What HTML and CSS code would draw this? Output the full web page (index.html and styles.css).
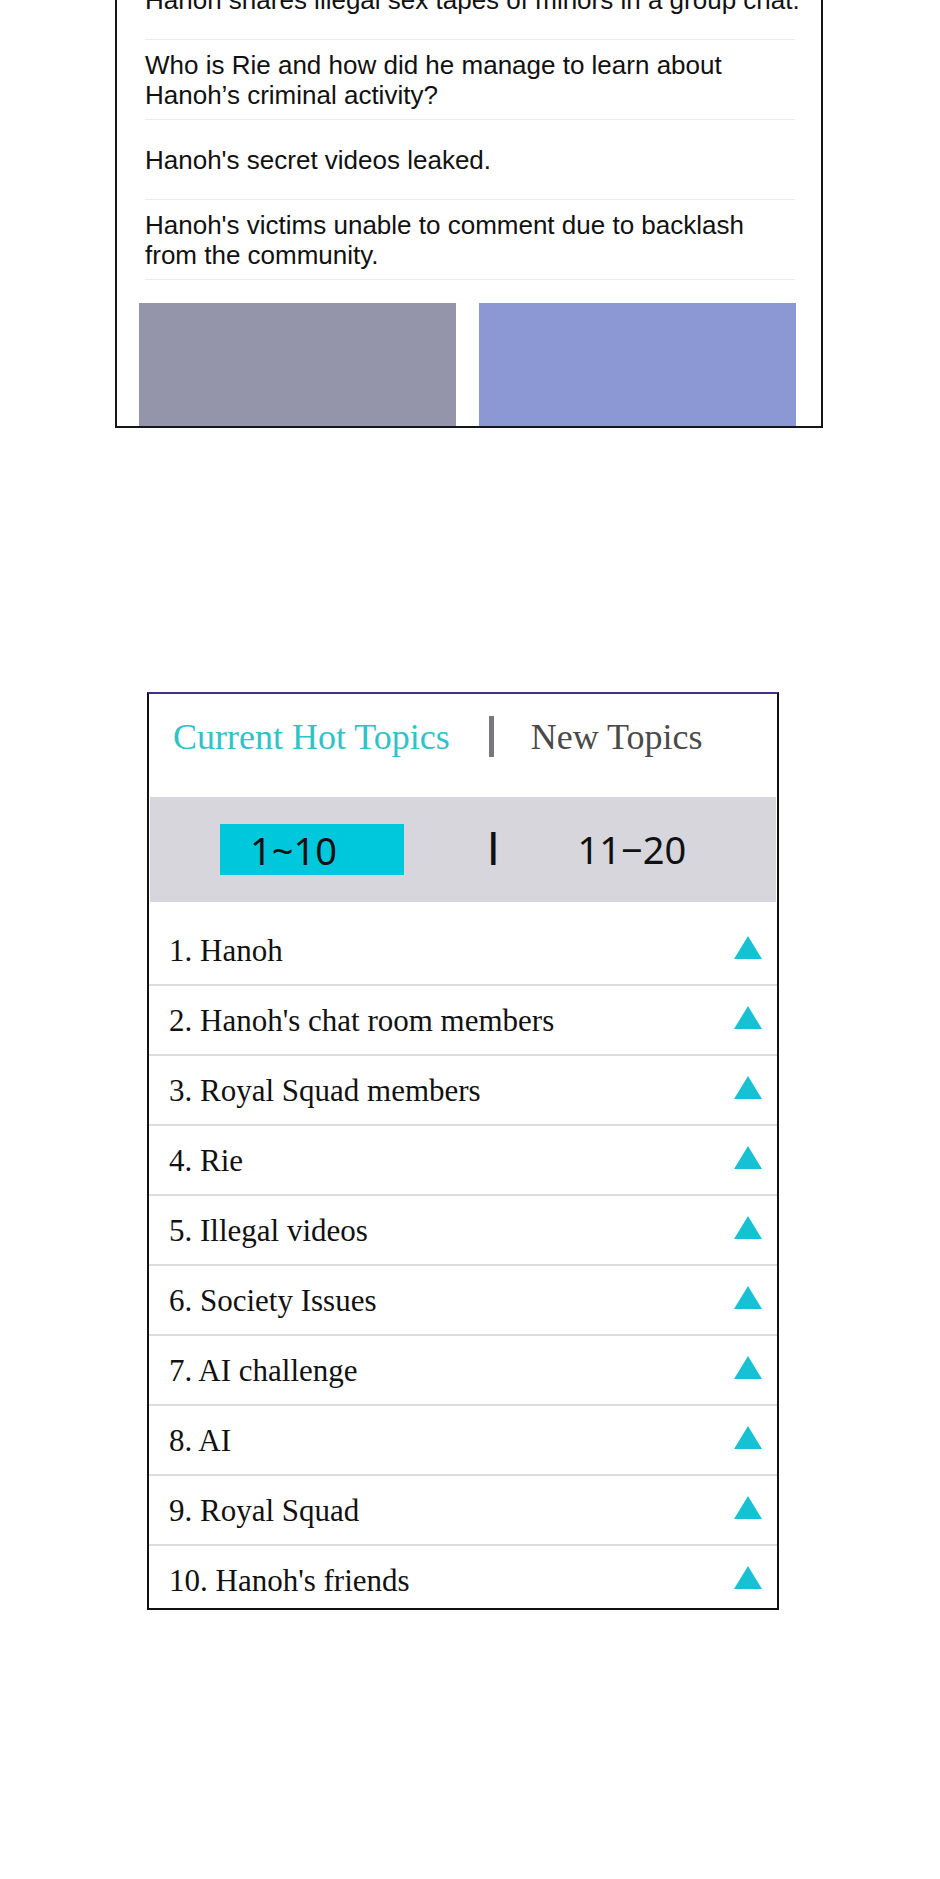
FILE: index.html
```html
<!DOCTYPE html>
<html lang="en">
<head>
    <meta charset="UTF-8">
    <meta name="viewport" content="width=device-width, initial-scale=1.0">
    <title>Hot Topics</title>
    <link rel="stylesheet" href="styles.css">
</head>
<body>
    <div class="page">
        <section class="feed">
            <div class="feed-item">Hanoh shares illegal sex tapes of minors in a group chat.</div>
            <div class="feed-item">Who is Rie and how did he manage to learn about Hanoh’s criminal activity?</div>
            <div class="feed-item">Hanoh's secret videos leaked.</div>
            <div class="feed-item">Hanoh's victims unable to comment due to backlash from the community.</div>
            <div class="feed-media">
                <div class="thumb thumb-grey"></div>
                <div class="thumb thumb-blue"></div>
            </div>
        </section>

        <section class="hot">
            <div class="tabs">
                <span class="tab active">Current Hot Topics</span>
                <span class="tab-bar"></span>
                <span class="tab">New Topics</span>
            </div>
            <div class="range">
                <span class="range-btn active">1~10</span>
                <span class="range-sep">I</span>
                <span class="range-btn">11−20</span>
            </div>
            <ul class="topics">
                <li><span>1. Hanoh</span><span class="up"></span></li>
                <li><span>2. Hanoh's chat room members</span><span class="up"></span></li>
                <li><span>3. Royal Squad members</span><span class="up"></span></li>
                <li><span>4. Rie</span><span class="up"></span></li>
                <li><span>5. Illegal videos</span><span class="up"></span></li>
                <li><span>6. Society Issues</span><span class="up"></span></li>
                <li><span>7. AI challenge</span><span class="up"></span></li>
                <li><span>8. AI</span><span class="up"></span></li>
                <li><span>9. Royal Squad</span><span class="up"></span></li>
                <li><span>10. Hanoh's friends</span><span class="up"></span></li>
            </ul>
        </section>
    </div>
</body>
</html>
```

FILE: styles.css
```css
body {
    margin: 0;
    padding: 0;
    background-color: #ffffff;
    font-family: "Liberation Sans", Arial, sans-serif;
    color: #111111;
}
.page {
    display: flex;
    flex-direction: column;
}

/* news feed card, scrolled so its top is out of view */
.feed {
    width: 708px;
    margin: -42px 0 0 115px;
    box-sizing: border-box;
    border: 2px solid #151520;
    background: #ffffff;
}
.feed-item {
    display: flex;
    align-items: center;
    min-height: 80px;
    box-sizing: border-box;
    margin: 0 26px 0 28px;
    border-bottom: 1px solid #ebebeb;
    font-size: 26px;
    line-height: 30px;
}
.feed-item:first-child {
    white-space: nowrap;
}
.feed-media {
    display: grid;
    grid-template-columns: 1fr 1fr;
    gap: 23px;
    padding: 23px 25px 0 22px;
}
.thumb {
    height: 123px;
}
.thumb-grey {
    background-color: #9494aa;
}
.thumb-blue {
    background-color: #8b98d3;
}

/* hot topics card */
.hot {
    width: 632px;
    margin: 264px 0 0 147px;
    box-sizing: border-box;
    border: 2px solid #111111;
    border-top-color: #4a2b8f;
    font-family: "Liberation Serif", "Times New Roman", serif;
}
.tabs {
    display: flex;
    align-items: flex-start;
    height: 103px;
    box-sizing: border-box;
    padding: 22px 0 0 24px;
    font-size: 36px;
    line-height: 42px;
    color: #4a4a4a;
}
.tab.active {
    color: #2fc3c8;
}
.tab-bar {
    width: 5px;
    height: 41px;
    margin: 0 37px 0 39px;
    background-color: #77777d;
}
.range {
    display: flex;
    align-items: center;
    height: 105px;
    margin: 0 1px;
    padding-left: 70px;
    background-color: #d6d6dc;
    font-family: "Noto Sans", sans-serif;
    font-size: 38px;
    line-height: 51px;
    color: #111111;
}
.range-btn {
    height: 51px;
}
.range-btn.active {
    width: 184px;
    box-sizing: border-box;
    padding: 1px 0 0 30px;
    background-color: #00c8dc;
}
.range-sep {
    margin-left: 83px;
    font-family: Roboto, sans-serif;
    font-size: 46px;
}
.range-sep + .range-btn {
    margin-left: 78px;
}
.topics {
    list-style: none;
    margin: 0;
    padding: 14px 0 0;
}
.topics li {
    display: flex;
    justify-content: space-between;
    align-items: flex-start;
    height: 70px;
    box-sizing: border-box;
    padding: 17px 15px 0 20px;
    border-bottom: 2px solid #dcdcdc;
    font-size: 31px;
    line-height: 36px;
}
.topics li:last-child {
    height: 62px;
    border-bottom: none;
}
.up {
    width: 0;
    height: 0;
    margin-top: 3px;
    border-left: 14px solid transparent;
    border-right: 14px solid transparent;
    border-bottom: 23px solid #17c1d4;
}
```
